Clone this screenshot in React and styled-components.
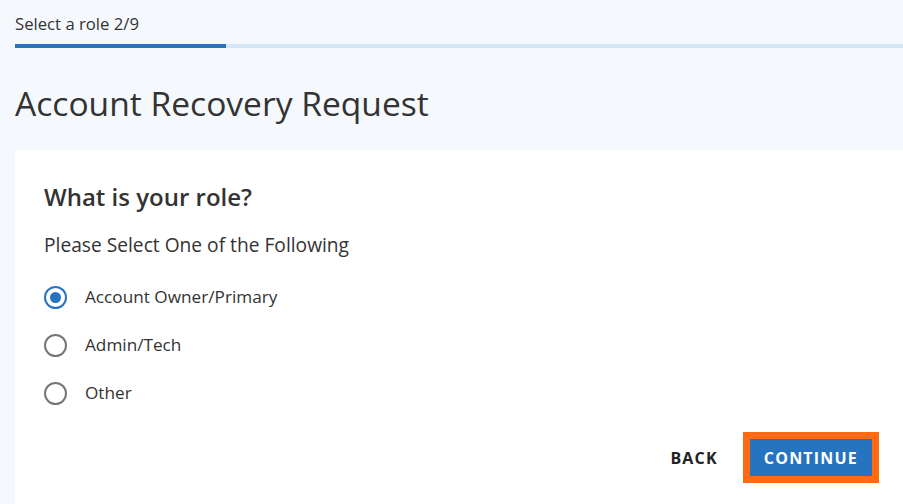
import React, { useState } from 'react';
import styled, { createGlobalStyle } from 'styled-components';

const COLORS = {
  page: '#f5f9fd',
  text: '#333333',
  blue: '#2673bf',
  lightBlue: '#d4e7f9',
  grey: '#767676',
  orange: '#ff6a13',
};

// full track length of the progress bar in the original (wider) layout
const TRACK_SPAN = 950;

const GlobalStyle = createGlobalStyle`
  html, body {
    margin: 0;
    padding: 0;
    background: ${COLORS.page};
    font-family: "Open Sans", "Liberation Sans", sans-serif;
    color: ${COLORS.text};
    overflow: hidden;
  }
`;

const Page = styled.div`
  width: 903px;
  height: 504px;
  padding-left: 15px;
  box-sizing: border-box;
  overflow: hidden;
`;

const StepLabel = styled.div`
  font-size: 16.7px;
  line-height: 22px;
  padding-top: 13px;
  height: 31px;
`;

const ProgressTrack = styled.div`
  display: flex;
  height: 4px;
  background-color: ${COLORS.lightBlue};
`;

const ProgressFill = styled.div`
  height: 100%;
  background-color: ${COLORS.blue};
`;

const Title = styled.h1`
  margin: 0;
  padding-top: 35px;
  font-size: 33.6px;
  font-weight: 400;
  line-height: 40px;
  height: 67px;
`;

const Card = styled.div`
  background: #fff;
  padding: 32px 24px 0 29px;
  height: 354px;
  box-sizing: border-box;
`;

const Question = styled.h2`
  margin: 0;
  font-size: 24px;
  font-weight: 600;
  line-height: 30px;
`;

const Hint = styled.p`
  margin: 21px 0 0;
  font-size: 19.2px;
  line-height: 24px;
`;

const Options = styled.div`
  display: flex;
  flex-direction: column;
  gap: 24px;
  margin-top: 28px;
`;

const Option = styled.label`
  display: flex;
  align-items: center;
  gap: 18px;
  font-size: 17.2px;
  line-height: 24px;
  cursor: pointer;
`;

const Circle = styled.span`
  width: 23px;
  height: 23px;
  box-sizing: border-box;
  border-radius: 50%;
  border: 2px solid ${({ $checked }) => ($checked ? COLORS.blue : COLORS.grey)};
  display: flex;
  align-items: center;
  justify-content: center;

  &::after {
    content: "";
    width: 11px;
    height: 11px;
    border-radius: 50%;
    background: ${COLORS.blue};
    display: ${({ $checked }) => ($checked ? 'block' : 'none')};
  }
`;

const Actions = styled.div`
  display: flex;
  justify-content: flex-end;
  align-items: center;
  gap: 25px;
  margin-top: 27px;
`;

const TextButton = styled.button`
  background: none;
  border: 0;
  padding: 0;
  font-family: inherit;
  font-size: 16px;
  font-weight: 700;
  letter-spacing: 1.2px;
  color: #222;
  cursor: pointer;
`;

const PrimaryButton = styled.button`
  background: ${COLORS.blue};
  border: 7px solid ${COLORS.orange};
  color: #fff;
  font-family: inherit;
  font-size: 16px;
  font-weight: 700;
  letter-spacing: 1.2px;
  padding: 0 14px;
  height: 51px;
  cursor: pointer;
`;

const roles = ['Account Owner/Primary', 'Admin/Tech', 'Other'];

export default function App() {
  const [role, setRole] = useState(roles[0]);
  const step = 2;
  const total = 9;

  return (
    <Page>
      <GlobalStyle />
      <StepLabel>Select a role {step}/{total}</StepLabel>
      <ProgressTrack>
        <ProgressFill style={{ width: `${Math.round((step / total) * TRACK_SPAN)}px` }} />
      </ProgressTrack>
      <Title>Account Recovery Request</Title>
      <Card>
        <Question>What is your role?</Question>
        <Hint>Please Select One of the Following</Hint>
        <Options role="radiogroup">
          {roles.map((r) => (
            <Option key={r} onClick={() => setRole(r)}>
              <Circle $checked={role === r} />
              {r}
            </Option>
          ))}
        </Options>
        <Actions>
          <TextButton>BACK</TextButton>
          <PrimaryButton>CONTINUE</PrimaryButton>
        </Actions>
      </Card>
    </Page>
  );
}
